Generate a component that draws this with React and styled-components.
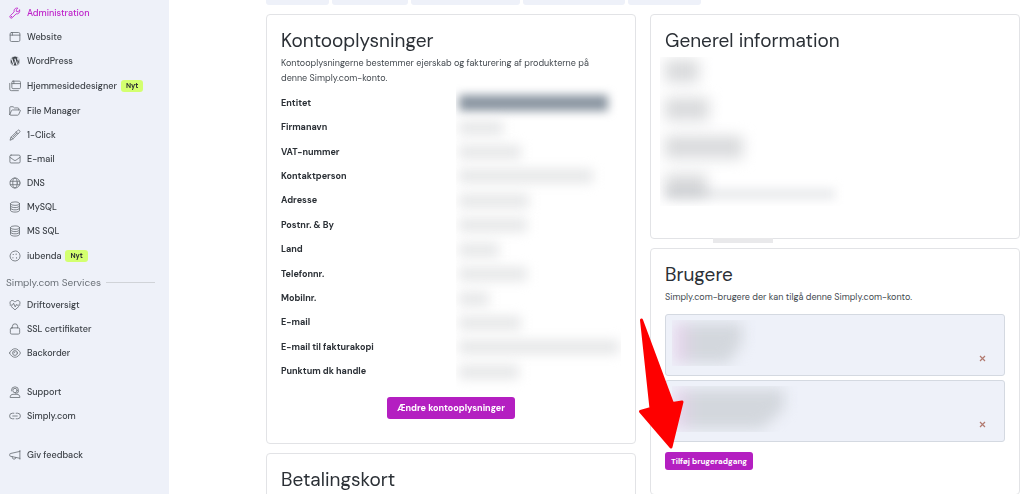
import React from "react"
import styled, { createGlobalStyle } from "styled-components"
import { FaWordpress } from "react-icons/fa"

const GlobalStyle = createGlobalStyle`
  * {
    box-sizing: border-box;
  }

  body {
    margin: 0;
    background: #fff;
    color: #2b3036;
    font-family: "DM Sans", Roboto, "Liberation Sans", sans-serif;
    font-size: 9px;
    line-height: 15px;
  }
`

const Page = styled.div`
  display: flex;
  height: 100vh;
  overflow: hidden;
`

// Sidebar
const Sidebar = styled.nav`
  flex: 0 0 169px;
  background: #eef1f9;
`

const NavList = styled.ul`
  list-style: none;
  margin: 0 0 14px;
  padding: 1px 0 0;
`

const NavLink = styled.a`
  display: flex;
  align-items: center;
  height: ${props => (props.$tall ? "26px" : "24px")};
  padding-left: 9px;
  color: ${props => (props.$active ? "#bd1fc9" : "#3c4147")};
  font-weight: 500;
  text-decoration: none;
`

const NavIcon = styled.svg`
  width: 12px;
  height: 12px;
  margin-right: 6px;
  fill: none;
  stroke: ${props => (props.$active ? "#bd1fc9" : "#6a7076")};
  stroke-width: 1.1;
  stroke-linecap: round;
  stroke-linejoin: round;
`

const WordPressIcon = styled(FaWordpress)`
  width: 10px;
  height: 10px;
  margin: 0 7px 0 1px;
`

const Badge = styled.span`
  margin-left: 4px;
  padding: 0 5px;
  border-radius: 3px;
  background: #d3ff70;
  color: #2b2f33;
  font-size: 7px;
  font-weight: 700;
  line-height: 12px;
`

const SectionLabel = styled.div`
  display: flex;
  align-items: center;
  height: 20px;
  margin-top: -11px;
  padding: 0 14px 0 6px;
  color: #6a7077;
  font-size: 10px;

  &::after {
    content: "";
    flex: 1;
    margin-left: 5px;
    border-top: 1px solid #d0d3d8;
  }
`

// Content
const Main = styled.main`
  flex: 1;
  min-width: 0;
  padding: 0 4px 0 97px;
`

const Tabs = styled.div`
  display: flex;
  gap: 3px;
  height: 5px;
  margin-bottom: 9px;
`

const Tab = styled.div`
  width: ${props => props.$width}px;
  border-radius: 0 0 3px 3px;
  background: #eef1f9;
`

const Columns = styled.div`
  display: grid;
  grid-template-columns: 1fr 1fr;
  gap: 14px;
`

const Column = styled.div`
  display: flex;
  flex-direction: column;
  gap: 9px;
  min-width: 0;
`

const Card = styled.section`
  position: relative;
  display: flex;
  flex-direction: column;
  min-height: ${props => props.$minHeight}px;
  padding: 13px 14px 24px;
  border: 1px solid #e2e3e6;
  border-radius: 4px;
  background: #fff;
`

const Title = styled.h2`
  margin: 0;
  font-size: 19px;
  font-weight: 400;
  line-height: 25px;
`

const Text = styled.p`
  margin: 3px 0 5px;
  padding-right: 14px;
  color: #444a50;
`

const Details = styled.dl`
  flex: 1;
  display: grid;
  grid-auto-rows: 1fr;
  margin: 0 0 13px;
`

const Detail = styled.div`
  display: grid;
  grid-template-columns: 175px 1fr;
  align-items: center;
`

const Term = styled.dt`
  font-weight: 700;
`

const Value = styled.dd`
  align-self: stretch;
  display: flex;
  align-items: center;
  margin: 0;
  padding-left: 3px;
  overflow-x: clip;
`

const Redacted = styled.span`
  width: ${props => props.$width}px;
  height: ${props => (props.$dark ? "16px" : "14px")};
  background: ${props => (props.$dark ? "#8a95a1" : "#e6e7e8")};
  filter: blur(${props => (props.$dark ? "5px" : "6px")});
`

const Button = styled.button`
  align-self: ${props => (props.$small ? "flex-start" : "center")};
  height: ${props => (props.$small ? "18px" : "22px")};
  padding: 0 ${props => (props.$small ? "6px" : "10px")};
  border: 0;
  border-radius: 3px;
  background: #b41fc1;
  color: #fff;
  font-family: inherit;
  font-size: ${props => (props.$small ? "8px" : "9px")};
  font-weight: 700;
  white-space: nowrap;
`

const Redaction = styled.div`
  display: flex;
  flex-direction: column;
  gap: 14px;
  width: 190px;
  height: 149px;
  margin: 4px 0 0 -5px;
  padding: 3px 5px;
  overflow: hidden;
`

const RedactedBlock = styled.div`
  flex-shrink: 0;
  width: ${props => props.$width}px;
  height: 24px;
  background: linear-gradient(#d9dadc 60%, #e6e7e9);
  filter: blur(7px);
`

const RedactedTail = styled.div`
  flex-shrink: 0;
  width: 170px;
  height: 12px;
  margin-top: -24px;
  background: #ebecee;
  filter: blur(5px);
  mix-blend-mode: multiply;
`

const CardHandle = styled.div`
  position: absolute;
  top: 100%;
  left: 62px;
  width: 60px;
  height: 5px;
  background: #e9e9eb;
`

const Users = styled.ul`
  display: grid;
  gap: 4px;
  list-style: none;
  margin: 4px 0 10px;
  padding: 0;
`

const User = styled.li`
  display: flex;
  align-items: flex-end;
  justify-content: space-between;
  height: 62px;
  padding: 5px 15px 10px 6px;
  border: 1px solid #d4d9e1;
  border-radius: 3px;
  background: #eef1f9;
`

const UserRedaction = styled.div`
  align-self: flex-start;
  width: 140px;
  height: 46px;
  padding: 3px 2px;
  overflow: hidden;
`

const RedactedUser = styled.div`
  width: ${props => props.$width}px;
  height: 40px;
  background: linear-gradient(90deg, #ead3ee, #d3d7dd 22px, #d3d7dd);
  clip-path: polygon(0 0, 100% 0, 100% 50%, 80% 100%, 0 100%);
`

const Blur = styled.div`
  filter: blur(7px);
`

const RemoveButton = styled.button`
  display: flex;
  padding: 3px;
  border: 0;
  background: none;
`

const Arrow = styled.svg`
  position: absolute;
  top: 67px;
  left: -16px;
  width: 50px;
  height: 136px;
  pointer-events: none;
`

const icons = {
  wrench: (
    <>
      <path d="M14.3 4.2 12 6.2 9.9 5.9 9.7 3.8 11.9 1.6C10 .9 7.8 1.8 7 3.7c-.4 1-.4 2-.1 2.9L1.7 11.6a1.9 1.9 0 0 0 2.7 2.7l5.1-5.2c2.7 .8 5.5-1.5 4.8-4.9z" />
      <circle cx="3.2" cy="12.9" r=".3" />
    </>
  ),
  browser: (
    <>
      <rect x="1.5" y="2" width="13" height="12" rx="1.8" />
      <path d="M1.5 5.5h13M4.5 2v3.5" />
    </>
  ),
  browsers: (
    <>
      <rect x="3.8" y="1.5" width="11.5" height="10" rx="1.6" />
      <path d="M3.8 4.8h11.5M6.5 1.5v3.3M1 4.5v7.7a2 2 0 0 0 2 2h9.5" />
    </>
  ),
  folder: (
    <path d="M1 12V3.5A1.2 1.2 0 0 1 2.2 2.3h3.3l1.7 1.6h4.6A1.2 1.2 0 0 1 13 5.1v1.5M1 12.7l2.3-5.2a1.5 1.5 0 0 1 1.4-.9h10l.6.7-2.4 5.4a1.5 1.5 0 0 1-1.3.9H2.2A1.2 1.2 0 0 1 1 12.7z" />
  ),
  wand: (
    <path d="M1.5 14.5l1.2-3.6 9-9a1.5 1.5 0 0 1 2.2 0l.2.2a1.5 1.5 0 0 1 0 2.2l-9 9zM9.7 3.9l2.4 2.4M2.7 10.9l2.4 2.4M5 10.9l5.2-5.2" />
  ),
  mail: (
    <>
      <rect x="1.2" y="2.8" width="13.6" height="10.5" rx="1.6" />
      <path d="M1.2 5.6l5.5 4a2.2 2.2 0 0 0 2.6 0l5.5-4" />
    </>
  ),
  globe: (
    <>
      <circle cx="8" cy="8" r="6.7" />
      <ellipse cx="8" cy="8" rx="3" ry="6.7" />
      <path d="M1.8 5.7h12.4M1.8 10.3h12.4" />
    </>
  ),
  database: (
    <>
      <ellipse cx="8" cy="3.5" rx="6" ry="2.3" />
      <path d="M2 3.5v9c0 1.3 2.7 2.3 6 2.3s6-1 6-2.3v-9M2 6.5c0 1.3 2.7 2.3 6 2.3s6-1 6-2.3M2 9.5c0 1.3 2.7 2.3 6 2.3s6-1 6-2.3" />
    </>
  ),
  cookie: (
    <>
      <path d="M8.3 1.4 5 2.2 2.3 4.7 1.3 8l.9 3.5 2.5 2.4 3.5.8 3.5-1 2.3-2.5.8-3.3-.9-3.4-2.4-2.3z" />
      <path d="M5.6 6h.1M5.2 10.3h.1M9.5 5.5h.1M10 10.5h.1" strokeWidth="1.6" />
    </>
  ),
  heart: (
    <>
      <path d="M1.6 7C.4 4.2 2.1 2 4.3 2 5.9 2 7 3 8 4.1 9 3 10.1 2 11.7 2c2.2 0 3.9 2.2 2.7 5M3 10l5 4.5 5-4.5" />
      <path d="M1.5 8.2h3.2l1.4-2.6 2.2 5 1.6-3.3.6.9h4" />
    </>
  ),
  lock: (
    <>
      <rect x="1.8" y="6.5" width="12.4" height="8.3" rx="1.8" />
      <path d="M4.5 6.5V4.6a3.5 3.5 0 0 1 7 0v1.9" />
    </>
  ),
  eye: (
    <>
      <path d="M.7 8C2.3 4.7 4.9 2.3 8 2.3S13.7 4.7 15.3 8c-1.6 3.3-4.2 5.7-7.3 5.7S2.3 11.3.7 8z" />
      <circle cx="8" cy="8" r="3.2" />
      <path d="M8 6.5A1.5 1.5 0 0 1 6.5 8" />
    </>
  ),
  support: (
    <>
      <path d="M3.3 6.5V5.8a4.7 4.7 0 0 1 9.4 0v1a2.7 2.7 0 0 1-2.7 2.7H8.5" />
      <circle cx="8" cy="6" r="2.9" />
      <path d="M1.5 14.8c0-2.4 1.6-3.7 3.9-3.7h5.2c2.3 0 3.9 1.3 3.9 3.7z" />
    </>
  ),
  link: (
    <path d="M6.5 4.3h-2a3.7 3.7 0 0 0 0 7.4h2M9.5 4.3h2a3.7 3.7 0 0 1 0 7.4h-2M5 8h6" />
  ),
  megaphone: (
    <path d="M14.5 2v11.5M14.5 3.2 2 6a1 1 0 0 0-1 1v1.7a1 1 0 0 0 1 1l12.5 2.7M4.5 10.3v1a2.3 2.3 0 0 0 4.5.6v-.6" />
  ),
}

const mainLinks = [
  { label: "Administration", icon: "wrench", active: true },
  { label: "Website", icon: "browser" },
  { label: "WordPress", icon: "wordpress" },
  { label: "Hjemmesidedesigner", icon: "browsers", isNew: true },
  { label: "File Manager", icon: "folder" },
  { label: "1-Click", icon: "wand" },
  { label: "E-mail", icon: "mail" },
  { label: "DNS", icon: "globe" },
  { label: "MySQL", icon: "database" },
  { label: "MS SQL", icon: "database" },
  { label: "iubenda", icon: "cookie", isNew: true },
]

const serviceLinks = [
  { label: "Driftoversigt", icon: "heart" },
  { label: "SSL certifikater", icon: "lock" },
  { label: "Backorder", icon: "eye" },
]

const helpLinks = [
  { label: "Support", icon: "support" },
  { label: "Simply.com", icon: "link" },
]

const feedbackLinks = [{ label: "Giv feedback", icon: "megaphone" }]

const details = [
  { label: "Entitet", width: 149, dark: true },
  { label: "Firmanavn", width: 44 },
  { label: "VAT-nummer", width: 62 },
  { label: "Kontaktperson", width: 134 },
  { label: "Adresse", width: 70 },
  { label: "Postnr. & By", width: 68 },
  { label: "Land", width: 40 },
  { label: "Telefonnr.", width: 68 },
  { label: "Mobilnr.", width: 30 },
  { label: "E-mail", width: 62 },
  { label: "E-mail til fakturakopi", width: 160 },
  { label: "Punktum dk handle", width: 60 },
]

const Nav = ({ links }) => (
  <NavList>
    {links.map(link => (
      <li key={link.label}>
        <NavLink href="#" $active={link.active} $tall={link.isNew}>
          {link.icon === "wordpress" ? (
            <WordPressIcon />
          ) : (
            <NavIcon viewBox="0 0 16 16" $active={link.active}>
              {icons[link.icon]}
            </NavIcon>
          )}
          {link.label}
          {link.isNew && <Badge>Nyt</Badge>}
        </NavLink>
      </li>
    ))}
  </NavList>
)

const UserItem = ({ width }) => (
  <User>
    <UserRedaction>
      <Blur>
        <RedactedUser $width={width} />
      </Blur>
    </UserRedaction>
    <RemoveButton aria-label="Fjern bruger">
      <svg width="7" height="7" viewBox="0 0 7 7">
        <path d="M1 1l5 5M6 1L1 6" stroke="#b27a70" strokeWidth="1.2" />
      </svg>
    </RemoveButton>
  </User>
)

const App = () => {
  return (
    <Page>
      <GlobalStyle />
      <Sidebar>
        <Nav links={mainLinks} />
        <SectionLabel>Simply.com Services</SectionLabel>
        <Nav links={serviceLinks} />
        <Nav links={helpLinks} />
        <Nav links={feedbackLinks} />
      </Sidebar>
      <Main>
        <Tabs>
          {[63, 76, 109, 102, 73].map(width => (
            <Tab key={width} $width={width} />
          ))}
        </Tabs>
        <Columns>
          <Column>
            <Card $minHeight={430}>
              <Title>Kontooplysninger</Title>
              <Text>
                Kontooplysningerne bestemmer ejerskab og fakturering af
                produkterne på denne Simply.com-konto.
              </Text>
              <Details>
                {details.map(({ label, width, dark }) => (
                  <Detail key={label}>
                    <Term>{label}</Term>
                    <Value>
                      <Redacted $width={width} $dark={dark} />
                    </Value>
                  </Detail>
                ))}
              </Details>
              <Button>Ændre kontooplysninger</Button>
            </Card>
            <Card>
              <Title>Betalingskort</Title>
            </Card>
          </Column>
          <Column>
            <Card $minHeight={225}>
              <Title>Generel information</Title>
              <Redaction>
                <RedactedBlock $width={34} />
                <RedactedBlock $width={44} />
                <RedactedBlock $width={78} />
                <RedactedBlock $width={42} />
                <RedactedTail />
              </Redaction>
              <CardHandle />
            </Card>
            <Card $minHeight={246}>
              <Title>Brugere</Title>
              <Text>Simply.com-brugere der kan tilgå denne Simply.com-konto.</Text>
              <Users>
                <UserItem width={68} />
                <UserItem width={110} />
              </Users>
              <Button $small>Tilføj brugeradgang</Button>
              <Arrow viewBox="0 0 50 136">
                <path
                  d="M6.5 4 37.5 87.5 47 86 36 131 5.5 95.5 16 92.5z"
                  fill="#fe0000"
                  stroke="#fe0000"
                  strokeWidth="3"
                  strokeLinejoin="round"
                />
              </Arrow>
            </Card>
          </Column>
        </Columns>
      </Main>
    </Page>
  )
}

export default App
